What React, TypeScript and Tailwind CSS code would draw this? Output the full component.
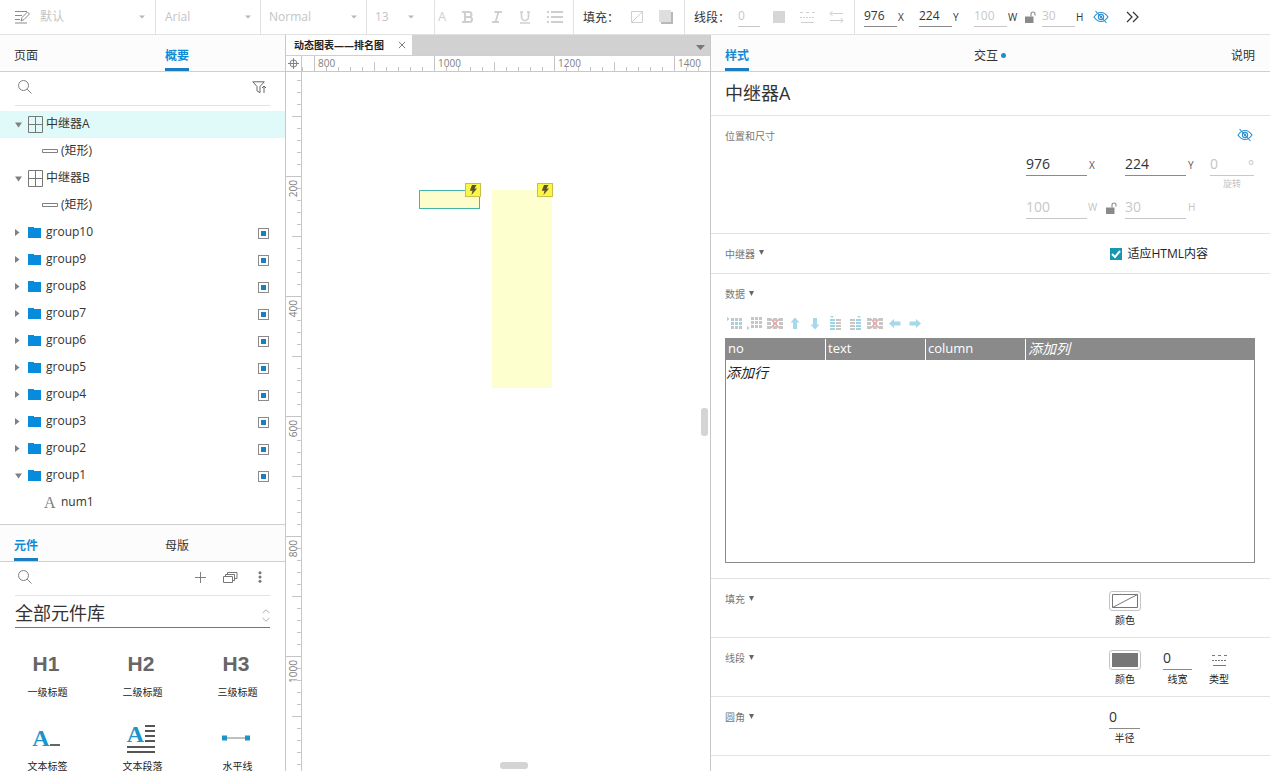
import React from "react";

const cx = (...c: (string | false | undefined)[]) => c.filter(Boolean).join(" ");

function Caret({ className }: { className: string }) {
  return (
    <svg width="6" height="4" viewBox="0 0 6 4" className={className} aria-hidden="true">
      <path d="M0 0.5h6L3 3.5z" fill="currentColor" />
    </svg>
  );
}

function SearchIcon() {
  return (
    <svg width="16" height="16" viewBox="0 0 16 16" fill="none" stroke="#808080" strokeWidth="1" aria-hidden="true">
      <circle cx="6.5" cy="6.5" r="5" />
      <path d="M10.2 10.2l4.3 4.3" />
    </svg>
  );
}

function HiddenEye() {
  return (
    <svg width="16" height="14" viewBox="0 0 16 14" fill="none" stroke="#2a8fd0" strokeWidth="1.1" aria-hidden="true">
      <path d="M1 7c2-3 4.300-4.500 7-4.500s5 1.500 7 4.500c-2 3-4.300 4.500-7 4.500S3 10 1 7z" />
      <circle cx="8" cy="7" r="2.600" />
      <circle cx="8" cy="7" r="0.600" />
      <path d="M2.500 1l11 12" />
    </svg>
  );
}

function Lock() {
  return (
    <svg width="12" height="12" viewBox="0 0 12 12" aria-hidden="true">
      <path d="M0 5.500h8.500V12H0z" fill="#8a8a8a" />
      <path d="M6 5.500V3a2 2 0 0 1 4 0v1.500" fill="none" stroke="#8a8a8a" strokeWidth="1.100" />
    </svg>
  );
}

function Field({
  label,
  value,
  className,
  muted,
}: {
  label: string;
  value: string;
  className: string;
  muted?: boolean;
}) {
  return (
    <input
      aria-label={label}
      defaultValue={value}
      className={cx(
        "min-w-0 rounded-none border-b bg-transparent outline-none",
        muted ? "border-[#c8c8c8] text-[#c8c8c8]" : "border-[#8a8a8a] text-[#333]",
        className,
      )}
    />
  );
}

function ToolSelect({ label, value, className }: { label: string; value: string; className: string }) {
  return (
    <div className={cx("flex h-full shrink-0 items-center border-r border-[#e2e2e2]", className)}>
      <select
        aria-label={label}
        className="min-w-0 flex-1 appearance-none bg-transparent pb-px text-[12px] leading-4 text-[#c4c4c4] outline-none"
      >
        <option>{value}</option>
      </select>
      <Caret className="shrink-0 text-[#b8b8b8]" />
    </div>
  );
}

function Toolbar() {
  return (
    <header className="flex h-[35px] shrink-0 items-center border-b border-[#e2e2e2] bg-white">
      <div className="flex h-full w-[156px] shrink-0 items-center gap-[9px] border-r border-[#e2e2e2] pr-[10px] pl-[14px]">
        <svg width="17" height="14" viewBox="0 0 17 14" fill="none" stroke="#8a8a8a" aria-hidden="true">
          <path d="M1 1.500h12M1 5.500h7M1 9.500h5M1 13h12" />
          <path d="M7 11l1-3.500L13.500 2l2 2L10 9.500z" />
        </svg>
        <select
          aria-label="样式"
          className="min-w-0 flex-1 appearance-none bg-transparent pb-px text-[12px] leading-4 text-[#c4c4c4] outline-none"
        >
          <option>默认</option>
        </select>
        <Caret className="text-[#b8b8b8]" />
      </div>
      <ToolSelect label="字体" value="Arial" className="w-[105px] pr-[9px] pl-[9px]" />
      <ToolSelect label="字重" value="Normal" className="w-[106px] pr-[9px] pl-2" />
      <ToolSelect label="字号" value="13" className="w-[68px] pr-5 pl-2" />
      <div className="flex h-full w-[139px] shrink-0 items-center justify-between border-r border-[#e2e2e2] pr-[10px] pl-[3px] text-[#cfcfcf]">
        <button aria-label="文字颜色" className="pb-[2px] text-[13px] leading-4">A</button>
        <button aria-label="粗体">
          <svg width="12" height="12" viewBox="0 0 12 12" fill="none" stroke="currentColor" strokeWidth="2" aria-hidden="true">
            <path d="M0 1h7a2.300 2.300 0 0 1 0 5H3h4.500a2.500 2.500 0 0 1 0 5H0M3 1v10" />
          </svg>
        </button>
        <button aria-label="斜体">
          <svg width="12" height="12" viewBox="0 0 12 12" fill="none" stroke="currentColor" strokeWidth="1.800" aria-hidden="true">
            <path d="M3.500 1H11M1 11h7M7.500 1l-3 10" />
          </svg>
        </button>
        <button aria-label="下划线">
          <svg width="12" height="13" viewBox="0 0 12 13" fill="none" stroke="currentColor" strokeWidth="1.600" aria-hidden="true">
            <path d="M1 1h3M8 1h3M2.500 1v5a3.500 3.500 0 0 0 7 0V1M1 12h10" />
          </svg>
        </button>
        <button aria-label="项目符号">
          <svg width="16" height="12" viewBox="0 0 16 12" stroke="currentColor" strokeWidth="2" aria-hidden="true">
            <path d="M0 1h2M4 1h12M0 6h2M4 6h12M0 11h2M4 11h12" />
          </svg>
        </button>
      </div>
      <div className="flex h-full w-[111px] shrink-0 items-center border-r border-[#e2e2e2] pl-[9px] text-[12px] text-[#333]">
        <span className="w-12 pt-px">填充：</span>
        <button aria-label="填充颜色">
          <svg width="12" height="12" viewBox="0 0 12 12" fill="none" stroke="#cfcfcf" aria-hidden="true">
            <path d="M.5.5h11v11H.5zM.5 11.500l11-11" />
          </svg>
        </button>
        <button aria-label="阴影" className="ml-4">
          <svg width="14" height="14" viewBox="0 0 14 14" aria-hidden="true">
            <path d="M2 2h12v12H2z" fill="#b8b8b8" />
            <path d="M0 0h12v12H0z" fill="#dedede" />
          </svg>
        </button>
      </div>
      <div className="flex h-full w-[170px] shrink-0 items-center border-r border-[#e2e2e2] pl-[9px] text-[12px] text-[#333]">
        <span className="w-11 pt-px">线段：</span>
        <Field label="线宽" value="0" muted className="h-[19px] w-[22px] pb-[2px] text-[12px]" />
        <button aria-label="线段颜色" className="ml-[13px] size-3 bg-[#d6d6d6]" />
        <button aria-label="线段类型" className="ml-[15px]">
          <svg width="15" height="12" viewBox="0 0 15 12" stroke="#cfcfcf" aria-hidden="true">
            <path d="M0 1.500h15" strokeDasharray="3 3" />
            <path d="M0 6.500h15" strokeDasharray="2 1" />
            <path d="M1 11.500h13" />
          </svg>
        </button>
        <button aria-label="箭头样式" className="ml-[14px]">
          <svg width="15" height="12" viewBox="0 0 15 12" fill="none" stroke="#cfcfcf" aria-hidden="true">
            <path d="M14 2.500H1M3.500 0L1 2.500 3.500 5M1 9.500h13M11.500 7L14 9.500 11.500 12" />
          </svg>
        </button>
      </div>
      <div className="flex min-w-0 flex-1 items-center pl-[9px] text-[13px] text-[#333]">
        <Field label="X" value="976" className="h-[19px] w-[33px] pb-[2px] text-[12px]" />
        <span className="w-[22px] pl-px text-[10px]">X</span>
        <Field label="Y" value="224" className="h-[19px] w-[33px] pb-[2px] text-[12px]" />
        <span className="w-[22px] pl-px text-[10px]">Y</span>
        <Field label="W" value="100" muted className="h-[19px] w-[33px] pb-[2px] text-[12px]" />
        <span className="w-[18px] pl-px text-[10px]">W</span>
        <button aria-label="锁定比例" className="w-[17px]"><Lock /></button>
        <Field label="H" value="30" muted className="h-[19px] w-[33px] pb-[2px] text-[12px]" />
        <span className="w-[18px] pl-px text-[10px]">H</span>
        <button aria-label="隐藏"><HiddenEye /></button>
        <button aria-label="更多" className="ml-[17px]">
          <svg width="14" height="12" viewBox="0 0 14 12" fill="none" stroke="#333" strokeWidth="1.200" aria-hidden="true">
            <path d="M1 1l5 5-5 5M7 1l5 5-5 5" />
          </svg>
        </button>
      </div>
    </header>
  );
}

function Tab({ label, active, dot }: { label: string; active?: boolean; dot?: boolean }) {
  return (
    <button
      role="tab"
      aria-selected={!!active}
      className={cx(
        "flex h-full items-center border-y-3 border-t-transparent text-[12px] leading-4",
        active ? "border-b-[#1a7fc1] font-bold text-[#0f8bd6]" : "border-b-transparent text-[#333]",
      )}
    >
      <span className="pt-[6px]">{label}</span>
      {dot && <span className="mt-[5px] ml-[3px] size-[5px] rounded-full bg-[#1a8fcb]" />}
    </button>
  );
}

function FolderIcon() {
  return (
    <svg width="14" height="12" viewBox="0 0 14 12" className="mr-1 shrink-0" aria-hidden="true">
      <path d="M0 0h6v1h7V11H0z" fill="#078bdc" />
    </svg>
  );
}

function RepeaterIcon() {
  return (
    <svg width="16" height="18" viewBox="0 0 16 18" fill="none" stroke="#777" className="mr-[2px] shrink-0" aria-hidden="true">
      <path d="M.5.5h14v16H.5zM7.500.5v16M.5 8.500h14" />
    </svg>
  );
}

type Node = { name: string; kind: "repeater" | "rect" | "group" | "text"; open?: boolean; selected?: boolean };

const outline: Node[] = [
  { name: "中继器A", kind: "repeater", open: true, selected: true },
  { name: "(矩形)", kind: "rect" },
  { name: "中继器B", kind: "repeater", open: true },
  { name: "(矩形)", kind: "rect" },
  ...[10, 9, 8, 7, 6, 5, 4, 3, 2].map((n): Node => ({ name: `group${n}`, kind: "group" })),
  { name: "group1", kind: "group", open: true },
  { name: "num1", kind: "text" },
];

function OutlineRow({ node }: { node: Node }) {
  const child = node.kind === "rect" || node.kind === "text";
  return (
    <li className={cx("flex h-[27px] items-center pr-4", child ? "pl-[42px]" : "pl-[14px]", node.selected && "bg-[#dffaf8]")}>
      {!child && (
        <button aria-label={node.open ? "折叠" : "展开"} className="w-[14px] shrink-0 text-[#808080]">
          <svg width="8" height="8" viewBox="0 0 8 8" aria-hidden="true">
            {node.open ? <path d="M1 1.500h7L4.500 6.500z" fill="currentColor" /> : <path d="M1 0L5.500 3.500 1 7z" fill="currentColor" />}
          </svg>
        </button>
      )}
      {node.kind === "repeater" && <RepeaterIcon />}
      {node.kind === "group" && <FolderIcon />}
      {node.kind === "rect" && (
        <svg width="16" height="5" viewBox="0 0 16 5" className="mr-[3px]" fill="none" stroke="#808080" aria-hidden="true">
          <path d="M.5.5h15v3H.5z" />
        </svg>
      )}
      {node.kind === "text" && (
        <span className="w-[19px] pl-[2px] font-['Liberation_Serif',serif] text-[16px] leading-4 text-[#808080]">A</span>
      )}
      <span className="flex-1 pb-[2px] text-[12px] leading-4 text-[#333]">{node.name}</span>
      {node.kind === "group" && (
        <button aria-label="切换可见性" className="mt-[2px] flex size-[11px] items-center justify-center border border-[#8a8a8a] bg-white">
          <span className="size-[5px] bg-[#1a7fc1]" />
        </button>
      )}
    </li>
  );
}

function LibraryItem({ label, children }: { label: string; children: React.ReactNode }) {
  return (
    <button className="flex h-[74px] flex-col items-center text-[10px] leading-4 text-[#222]">
      <span className="flex h-10 items-center justify-center">{children}</span>
      <span className="whitespace-nowrap">{label}</span>
    </button>
  );
}

const heading = "pr-[3px] font-['Liberation_Sans',sans-serif] text-[21px] font-bold text-[#666]";

function LeftPanel() {
  return (
    <aside className="flex w-[286px] shrink-0 flex-col overflow-hidden border-r border-[#c8c8c8]">
      <div role="tablist" className="flex h-[37px] shrink-0 gap-[127px] border-b border-[#cfcfcf] bg-[#fcfcfc] pl-[14px]">
        <Tab label="页面" />
        <Tab label="概要" active />
      </div>
      <div className="mx-[15px] flex h-[34px] shrink-0 items-center justify-between border-b border-[#e2e2e2] pb-[3px]">
        <button aria-label="搜索" className="pl-[2px]"><SearchIcon /></button>
        <button aria-label="筛选" className="pr-[3px]">
          <svg width="15" height="13" viewBox="0 0 15 13" fill="none" stroke="#666" aria-hidden="true">
            <path d="M.8.8h11.500L8 5.500v6.200L5 9.800V5.500zM12 12V5M10 7l2-2 2 2" />
          </svg>
        </button>
      </div>
      <ul className="shrink-0 pt-[5px] pb-2">
        {outline.map((n, i) => (
          <OutlineRow key={i} node={n} />
        ))}
      </ul>
      <div role="tablist" className="flex h-[38px] shrink-0 gap-[127px] border-y border-[#cfcfcf] bg-[#fcfcfc] pl-[14px]">
        <Tab label="元件" active />
        <Tab label="母版" />
      </div>
      <div className="mx-[15px] flex h-[34px] shrink-0 items-center border-b border-[#e2e2e2] pb-[3px]">
        <div className="flex flex-1 pl-[2px]">
          <button aria-label="搜索元件"><SearchIcon /></button>
        </div>
        <button aria-label="添加元件库" className="mr-[17px]">
          <svg width="11" height="11" viewBox="0 0 11 11" stroke="#808080" aria-hidden="true">
            <path d="M5.500 0v11M0 5.500h11" />
          </svg>
        </button>
        <button aria-label="元件库" className="mr-5">
          <svg width="15" height="12" viewBox="0 0 15 12" fill="none" stroke="#777" aria-hidden="true">
            <path d="M.5 5.500h9v6h-9zM2.500 5.500v-2h9v6h-2M4.500 3.500v-2h9.500v6h-2.500" />
          </svg>
        </button>
        <button aria-label="更多选项" className="mr-2">
          <svg width="4" height="12" viewBox="0 0 4 12" fill="#777" aria-hidden="true">
            <circle cx="2" cy="1.800" r="1.500" />
            <circle cx="2" cy="6" r="1.500" />
            <circle cx="2" cy="10.200" r="1.500" />
          </svg>
        </button>
      </div>
      <div className="mx-[15px] flex h-8 shrink-0 items-center border-b border-[#777] pt-[3px]">
        <select aria-label="元件库列表" className="min-w-0 flex-1 appearance-none bg-transparent text-[18px] leading-7 text-[#333] outline-none">
          <option>全部元件库</option>
        </select>
        <svg width="8" height="13" viewBox="0 0 8 13" className="mt-1" fill="none" stroke="#b0b0b0" aria-hidden="true">
          <path d="M.5 4L4 .8 7.500 4M.5 9L4 12.200 7.500 9" />
        </svg>
      </div>
      <div className="grid min-h-0 grid-cols-3 overflow-hidden pt-4">
        <LibraryItem label="一级标题"><span className={heading}>H1</span></LibraryItem>
        <LibraryItem label="二级标题"><span className={heading}>H2</span></LibraryItem>
        <LibraryItem label="三级标题"><span className={heading}>H3</span></LibraryItem>
        <LibraryItem label="文本标签">
          <span className="flex items-end pr-[3px] font-['Liberation_Serif',serif] text-[24px] leading-6 font-bold text-[#1a94c9]">
            A<span className="mb-1 h-[2px] w-[10px] bg-[#666]" />
          </span>
        </LibraryItem>
        <LibraryItem label="文本段落">
          <span className="flex flex-col gap-[2px] pr-[3px]">
            <span className="flex items-center font-['Liberation_Serif',serif] text-[24px] leading-5 font-bold text-[#1a94c9]">
              A
              <svg width="11" height="18" viewBox="0 0 11 18" stroke="#555" strokeWidth="2" aria-hidden="true">
                <path d="M1 1h10M1 6h10M1 11h10M1 16h10" />
              </svg>
            </span>
            <svg width="28" height="7" viewBox="0 0 28 7" stroke="#555" strokeWidth="2" aria-hidden="true">
              <path d="M0 1h28M0 6h28" />
            </svg>
          </span>
        </LibraryItem>
        <LibraryItem label="水平线">
          <span className="pr-[3px]">
            <svg width="28" height="6" viewBox="0 0 28 6" aria-hidden="true">
              <path d="M3 3h22" stroke="#808080" />
              <path d="M0 .5h5v5H0zM23 .5h5v5h-5z" fill="#1a94c9" />
            </svg>
          </span>
        </LibraryItem>
      </div>
    </aside>
  );
}

const tickIndexes = Array.from({ length: 200 }, (_, i) => i);

function HorizontalRuler() {
  return (
    <svg className="h-[15px] min-w-0 flex-1 overflow-hidden" aria-hidden="true">
      {tickIndexes.map((i) => {
        const k = (i + 9) % 10;
        const x = i * 12 + 0.5;
        const top = k === 0 ? 0 : k === 5 ? 6 : 11;
        return <path key={i} d={`M${x} ${top}V15`} stroke="#c4c4c4" />;
      })}
      {tickIndexes.slice(0, 20).map((i) => (
        <text key={i} x={16 + i * 120} y="11" fontSize="10" fill="#808080">
          {800 + i * 200}
        </text>
      ))}
    </svg>
  );
}

function VerticalRuler() {
  return (
    <svg className="h-full w-4 shrink-0 overflow-hidden border-r border-[#c8c8c8]" aria-hidden="true">
      {tickIndexes.map((i) => {
        const k = (i + 2) % 10;
        const y = i * 12 + 8.5;
        const left = k === 0 ? 0 : k === 5 ? 6 : 11;
        return <path key={i} d={`M${left} ${y}H15`} stroke="#c4c4c4" />;
      })}
      {[200, 400, 600, 800, 1000, 1200, 1400].map((v, i) => (
        <text
          key={v}
          transform={`translate(11 ${108 + i * 120}) rotate(-90)`}
          textAnchor="end"
          fontSize="10"
          fill="#808080"
        >
          {v}
        </text>
      ))}
    </svg>
  );
}

function Bolt({ className }: { className: string }) {
  return (
    <span className={cx("absolute flex h-[14px] w-4 items-center justify-center border border-[#c9c04a] bg-[#fbf54a]", className)}>
      <svg width="8" height="10" viewBox="0 0 8 10" aria-hidden="true">
        <path d="M3 0h4.500L5.500 3.500H8L2.500 10 3.500 5.800H.8z" fill="#5a5428" />
      </svg>
    </span>
  );
}

function Canvas() {
  return (
    <main className="flex min-w-0 flex-1 flex-col">
      <div className="flex h-[21px] shrink-0 items-center justify-between border-b border-[#cfcfcf] bg-[#d1d1d1]">
        <div className="flex h-full items-center gap-[14px] bg-white pr-[6px] pl-2">
          <span className="text-[10px] font-bold whitespace-nowrap text-[#222]">动态图表——排名图</span>
          <button aria-label="关闭标签页">
            <svg width="8" height="8" viewBox="0 0 8 8" stroke="#808080" aria-hidden="true">
              <path d="M.8.8l6.400 6.400M7.200.8L.8 7.200" />
            </svg>
          </button>
        </div>
        <button aria-label="标签页列表" className="pt-1 pr-[5px]">
          <svg width="9" height="5" viewBox="0 0 9 5" aria-hidden="true">
            <path d="M0 0h9L4.500 5z" fill="#777" />
          </svg>
        </button>
      </div>
      <div className="flex h-4 shrink-0 border-b border-[#c8c8c8]">
        <div className="flex w-4 shrink-0 items-center justify-center border-r border-[#c8c8c8]">
          <svg width="11" height="11" viewBox="0 0 11 11" fill="none" stroke="#808080" aria-hidden="true">
            <circle cx="5.500" cy="5.500" r="3.500" />
            <path d="M5.500 0v11M0 5.500h11" />
          </svg>
        </div>
        <HorizontalRuler />
      </div>
      <div className="flex min-h-0 flex-1">
        <VerticalRuler />
        <div className="relative min-w-0 flex-1 overflow-hidden">
          <div className="absolute top-[118px] left-[117px] h-[19px] w-[61px] border border-[#45b5a8] bg-[#fdfdcb]" />
          <Bolt className="top-[111px] left-[163px]" />
          <div className="absolute top-[118px] left-[190px] h-[198px] w-[60px] bg-[#feffcf]" />
          <Bolt className="top-[111px] left-[235px]" />
          <div className="absolute top-[336px] right-[2px] h-7 w-[7px] rounded-[3px] bg-[#d4d4d4]" />
          <div className="absolute bottom-[2px] left-[198px] h-[7px] w-7 rounded-[3px] bg-[#d4d4d4]" />
        </div>
      </div>
    </main>
  );
}

function SectionTitle({ children, arrow = true }: { children: React.ReactNode; arrow?: boolean }) {
  return (
    <h3 className="flex items-center gap-1 text-[10px] leading-4 text-[#777]">
      {children}
      {arrow && (
        <svg width="5" height="5" viewBox="0 0 5 5" className="mb-[2px]" aria-hidden="true">
          <path d="M0 0h5L2.500 5z" fill="#666" />
        </svg>
      )}
    </h3>
  );
}

function GridGlyph({ kind }: { kind: "above" | "below" | "delRow" | "left" | "right" | "delCol" }) {
  const small = kind === "above" || kind === "below";
  const tall = kind === "left" || kind === "right";
  const cols = small ? [4, 8, 12] : tall ? [3, 9] : [0, 6, 12];
  const rows = tall ? [3, 6, 9, 12] : kind === "below" ? [1, 5, 9] : [2, 6, 10];
  return (
    <svg width="16" height="16" viewBox="0 0 16 16" aria-hidden="true">
      {rows.map((y, r) =>
        cols.map((x, c) => {
          const tinted =
            (kind === "above" && r === 1) ||
            (kind === "left" && c === 0) ||
            (kind === "right" && c === 1);
          return (
            <rect key={`${r}-${c}`} x={x} y={y} width={small ? 3 : tall ? 5 : 4} height={tall ? 2 : 3} fill={tinted ? "#9fd3e3" : "#c6c6c6"} />
          );
        }),
      )}
      {kind === "above" && <path d="M0 1l2.500 2L0 5z" fill="#9fd3e3" />}
      {kind === "below" && <path d="M0 10l2.500 2L0 14z" fill="#9fd3e3" />}
      {kind === "left" && <path d="M3 0h4L5 2z" fill="#9fd3e3" />}
      {kind === "right" && <path d="M10 0h4l-2 2z" fill="#9fd3e3" />}
      {(kind === "delRow" || kind === "delCol") && <path d="M4 3l8 9M12 3l-8 9" stroke="#eba9a9" strokeWidth="1.500" />}
    </svg>
  );
}

function ArrowGlyph({ dir }: { dir: "up" | "down" | "left" | "right" }) {
  const paths = {
    up: "M8 1.500l4.500 5h-2.500V13H6V6.500H3.500z",
    down: "M8 13.500L3.500 8.500h2.500V2h4V8.500h2.500z",
    left: "M2 7.500L7 3v2.500h6.500v4H7V12z",
    right: "M14 7.500L9 3v2.500H2.500v4H9V12z",
  };
  return (
    <svg width="16" height="16" viewBox="0 0 16 16" aria-hidden="true">
      <path d={paths[dir]} fill="#a5d8ea" />
    </svg>
  );
}

function DataTools() {
  return (
    <div className="mt-[14px] flex h-4 gap-1 pl-[2px]">
      <button aria-label="在上方插入行"><GridGlyph kind="above" /></button>
      <button aria-label="在下方插入行"><GridGlyph kind="below" /></button>
      <button aria-label="删除行"><GridGlyph kind="delRow" /></button>
      <button aria-label="上移行"><ArrowGlyph dir="up" /></button>
      <button aria-label="下移行"><ArrowGlyph dir="down" /></button>
      <button aria-label="在左侧插入列"><GridGlyph kind="left" /></button>
      <button aria-label="在右侧插入列"><GridGlyph kind="right" /></button>
      <button aria-label="删除列"><GridGlyph kind="delCol" /></button>
      <button aria-label="左移列"><ArrowGlyph dir="left" /></button>
      <button aria-label="右移列"><ArrowGlyph dir="right" /></button>
    </div>
  );
}

const section = "flex shrink-0 justify-between border-b border-[#e2e2e2] pr-[15px] pl-[14px]";
const caption = "pt-px text-center text-[10px] leading-4 text-[#222]";
const columnHead = "w-[100px] border-r border-white p-0 pb-[2px] pl-[2px] font-normal";

function RightPanel() {
  return (
    <aside className="flex w-[560px] shrink-0 flex-col overflow-hidden border-l border-[#c8c8c8]">
      <div role="tablist" className="flex h-[37px] shrink-0 justify-between border-b border-[#cfcfcf] bg-[#fcfcfc] pr-[15px] pl-[14px]">
        <Tab label="样式" active />
        <Tab label="交互" dot />
        <Tab label="说明" />
      </div>
      <h2 className="flex h-11 shrink-0 items-center border-b border-[#e2e2e2] pl-[14px] text-[18px] text-[#333]">中继器A</h2>

      <section className={cx(section, "h-[118px] items-start pt-3")}>
        <SectionTitle arrow={false}>位置和尺寸</SectionTitle>
        <div className="flex w-[229px] flex-col">
          <button aria-label="隐藏元件" className="mr-[2px] self-end"><HiddenEye /></button>
          <div className="mt-[11px] flex h-[38px] items-start text-[10px] text-[#555]">
            <Field label="X 坐标" value="976" className="h-[23px] w-[61px] pb-[2px] text-[14px]" />
            <span className="w-[38px] pt-[5px] pl-[2px]">X</span>
            <Field label="Y 坐标" value="224" className="h-[23px] w-[61px] pb-[2px] text-[14px]" />
            <span className="w-6 pt-[5px] pl-[2px]">Y</span>
            <div className="flex w-11 flex-col text-[#c4c4c4]">
              <div className="flex h-[23px] border-b border-[#c8c8c8]">
                <input aria-label="旋转角度" defaultValue="0" className="min-w-0 flex-1 pb-[2px] text-[14px] outline-none" />
                <span className="pt-[3px] text-[14px] leading-5">°</span>
              </div>
              <span className="text-center text-[9px] leading-4">旋转</span>
            </div>
          </div>
          <div className="mt-[5px] flex items-center text-[10px] text-[#c4c4c4]">
            <Field label="宽度" value="100" muted className="h-[23px] w-[61px] pb-[2px] text-[14px]" />
            <span className="w-[19px] pl-px">W</span>
            <button aria-label="锁定宽高比" className="w-[19px]"><Lock /></button>
            <Field label="高度" value="30" muted className="h-[23px] w-[61px] pb-[2px] text-[14px]" />
            <span className="pl-[2px]">H</span>
          </div>
        </div>
      </section>

      <section className={cx(section, "h-10 items-center")}>
        <SectionTitle>中继器</SectionTitle>
        <label className="mr-[47px] flex items-center gap-[5px] pt-px text-[12px] text-[#222]">
          <span className="relative flex size-3">
            <input type="checkbox" defaultChecked className="size-3 appearance-none bg-white checked:bg-[#1696b0]" />
            <svg width="12" height="12" viewBox="0 0 12 12" className="pointer-events-none absolute inset-0" fill="none" stroke="white" strokeWidth="2" aria-hidden="true">
              <path d="M2 6l3 3 5-6" />
            </svg>
          </span>
          适应HTML内容
        </label>
      </section>

      <section className="h-[305px] shrink-0 border-b border-[#e2e2e2] pt-3 pr-[15px] pl-[14px]">
        <SectionTitle>数据</SectionTitle>
        <DataTools />
        <div className="mt-[6px] h-[225px] border border-[#8a8a8a]">
          <table className="w-full table-fixed border-separate border-spacing-0 text-left text-[13px] leading-[19px]">
            <thead className="bg-[#8a8a8a] text-white">
              <tr className="h-[21px]">
                <th className={columnHead}>no</th>
                <th className={columnHead}>text</th>
                <th className={columnHead}>column</th>
                <th className="p-0 pb-[2px] pl-[2px] text-[14px] font-normal italic">添加列</th>
              </tr>
            </thead>
            <tbody>
              <tr className="h-6">
                <td colSpan={4} className="p-0 text-[14px] text-[#222] italic">添加行</td>
              </tr>
            </tbody>
          </table>
        </div>
      </section>

      <section className={cx(section, "h-[59px] items-start pt-3")}>
        <SectionTitle>填充</SectionTitle>
        <div className="flex w-[146px]">
          <button className="flex w-8 flex-col items-center">
            <span className="flex h-5 w-8 items-center justify-center rounded-[3px] border border-[#c4c4c4]">
              <svg width="26" height="14" viewBox="0 0 26 14" fill="none" stroke="#777" aria-hidden="true">
                <path d="M.5.5h25v13H.5zM.5 13.500l25-13" />
              </svg>
            </span>
            <span className={caption}>颜色</span>
          </button>
        </div>
      </section>

      <section className={cx(section, "h-[59px] items-start pt-3")}>
        <SectionTitle>线段</SectionTitle>
        <div className="flex w-[146px]">
          <button className="flex w-8 flex-col items-center">
            <span className="flex h-5 w-8 items-center justify-center rounded-[3px] border border-[#c4c4c4]">
              <span className="h-[14px] w-[26px] bg-[#777]" />
            </span>
            <span className={caption}>颜色</span>
          </button>
          <label className="ml-[22px] flex w-[29px] flex-col">
            <Field label="线宽" value="0" className="h-5 w-full pb-1 text-[14px]" />
            <span className={caption}>线宽</span>
          </label>
          <button className="ml-[15px] flex w-6 flex-col items-center">
            <span className="flex h-5 items-center">
              <svg width="15" height="12" viewBox="0 0 15 12" stroke="#777" aria-hidden="true">
                <path d="M0 1.500h15" strokeDasharray="3 3" />
                <path d="M0 6.500h15" strokeDasharray="2 1" />
                <path d="M1 11.500h13" />
              </svg>
            </span>
            <span className={cx(caption, "whitespace-nowrap")}>类型</span>
          </button>
        </div>
      </section>

      <section className={cx(section, "h-[59px] items-start pt-3")}>
        <SectionTitle>圆角</SectionTitle>
        <div className="flex w-[146px]">
          <label className="flex w-[31px] flex-col">
            <Field label="半径" value="0" className="h-5 w-full pb-1 text-[14px]" />
            <span className={caption}>半径</span>
          </label>
        </div>
      </section>

      <section className={cx(section, "h-[59px] items-start pt-3")}>
        <SectionTitle>边距</SectionTitle>
      </section>
    </aside>
  );
}

export default function App() {
  return (
    <div className="flex h-screen flex-col overflow-hidden bg-white font-['Open_Sans','Noto_Sans_CJK_SC',sans-serif] text-[#333]">
      <Toolbar />
      <div className="flex min-h-0 flex-1">
        <LeftPanel />
        <Canvas />
        <RightPanel />
      </div>
    </div>
  );
}
